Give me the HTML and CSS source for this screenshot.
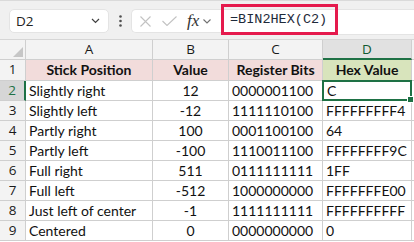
FILE: index.html
```html
<!DOCTYPE html>
<html lang="en">
<head>
    <meta charset="UTF-8">
    <meta name="viewport" content="width=device-width, initial-scale=1.0">
    <title>BIN2HEX - Excel</title>
    <link rel="stylesheet" href="styles.css">
</head>
<body>
    <div class="toolbar">
        <div class="namebox">
            <span class="cellref">D2</span>
            <svg class="chev" width="9" height="6" viewBox="0 0 9 6"><path d="M1 1 L4.5 4.5 L8 1" fill="none" stroke="#404040" stroke-width="1.2"/></svg>
        </div>
        <div class="dots">
            <svg width="3" height="12" viewBox="0 0 3 12"><circle cx="1.5" cy="1.5" r="1.3" fill="#505050"/><circle cx="1.5" cy="6" r="1.3" fill="#505050"/><circle cx="1.5" cy="10.5" r="1.3" fill="#505050"/></svg>
        </div>
        <div class="fbar">
            <div class="fbtns">
                <!-- cancel / enter / insert function -->
                <svg class="ico-x" width="11" height="11" viewBox="0 0 11 11"><path d="M0.5 0.5 L10.5 10.5 M10.5 0.5 L0.5 10.5" stroke="#c2c2c2" stroke-width="1.1" fill="none"/></svg>
                <svg class="ico-ok" width="15" height="10" viewBox="0 0 15 10"><path d="M0.5 5 L5 9.5 L14.5 0.5" stroke="#c2c2c2" stroke-width="1.1" fill="none"/></svg>
                <span class="fx">fx</span>
                <svg class="chev2" width="8" height="5" viewBox="0 0 8 5"><path d="M0.5 0.5 L4 4 L7.5 0.5" fill="none" stroke="#707070" stroke-width="1.1"/></svg>
            </div>
            <div class="finput">
                <span class="formula">=BIN2HEX(C2)</span>
            </div>
        </div>
    </div>

    <div class="sheet">
        <div class="corner"><span class="tri"></span></div>
        <div class="colhdr">A</div>
        <div class="colhdr">B</div>
        <div class="colhdr">C</div>
        <div class="colhdr sel">D</div>
        <div class="colhdr rest"></div>

        <div class="rowhdr">1</div>
        <div class="cell head">Stick Position</div>
        <div class="cell head">Value</div>
        <div class="cell head">Register Bits</div>
        <div class="cell head hex">Hex Value</div>
        <div class="cell rest"></div>

        <div class="rowhdr sel">2</div>
        <div class="cell">Slightly right</div>
        <div class="cell num">12</div>
        <div class="cell">0000001100</div>
        <div class="cell active">C<span class="handle"></span></div>
        <div class="cell rest"></div>

        <div class="rowhdr">3</div>
        <div class="cell">Slightly left</div>
        <div class="cell num">-12</div>
        <div class="cell">1111110100</div>
        <div class="cell">FFFFFFFFF4</div>
        <div class="cell rest"></div>

        <div class="rowhdr">4</div>
        <div class="cell">Partly right</div>
        <div class="cell num">100</div>
        <div class="cell">0001100100</div>
        <div class="cell">64</div>
        <div class="cell rest"></div>

        <div class="rowhdr">5</div>
        <div class="cell">Partly left</div>
        <div class="cell num">-100</div>
        <div class="cell">1110011100</div>
        <div class="cell">FFFFFFFF9C</div>
        <div class="cell rest"></div>

        <div class="rowhdr">6</div>
        <div class="cell">Full right</div>
        <div class="cell num">511</div>
        <div class="cell">0111111111</div>
        <div class="cell">1FF</div>
        <div class="cell rest"></div>

        <div class="rowhdr">7</div>
        <div class="cell">Full left</div>
        <div class="cell num">-512</div>
        <div class="cell">1000000000</div>
        <div class="cell">FFFFFFFE00</div>
        <div class="cell rest"></div>

        <div class="rowhdr">8</div>
        <div class="cell">Just left of center</div>
        <div class="cell num">-1</div>
        <div class="cell">1111111111</div>
        <div class="cell">FFFFFFFFFF</div>
        <div class="cell rest"></div>

        <div class="rowhdr">9</div>
        <div class="cell">Centered</div>
        <div class="cell num">0</div>
        <div class="cell">0000000000</div>
        <div class="cell">0</div>
        <div class="cell rest"></div>
    </div>
</body>
</html>
```

FILE: styles.css
```css
body {
    margin: 0;
    width: 414px;
    height: 242px;
    overflow: hidden;
    background-color: #ffffff;
    font-family: Lato, "Open Sans", sans-serif;
    color: #111111;
}

/* formula bar strip */
.toolbar {
    height: 40px;
    display: flex;
    align-items: flex-start;
    padding: 8px 0 0 9px;
    box-sizing: border-box;
    background-color: #f0f0f0;
    border-top: 1px solid #dadada;
    border-bottom: 1px solid #d6d6d6;
}
.namebox {
    width: 100px;
    height: 24px;
    box-sizing: border-box;
    display: flex;
    align-items: center;
    justify-content: space-between;
    padding: 0 8px 0 6px;
    background-color: #ffffff;
    border-radius: 5px;
    border: 1px solid #e4e4e4;
}
.cellref {
    font-family: "Open Sans", sans-serif;
    font-size: 13.5px;
    color: #222222;
}
.dots {
    width: 22px;
    height: 24px;
    display: flex;
    align-items: center;
    justify-content: center;
}
.fbar {
    flex: 1;
    display: flex;
    height: 24px;
}
.fbtns {
    width: 90px;
    height: 24px;
    box-sizing: border-box;
    display: flex;
    align-items: center;
    padding-left: 8px;
    background-color: #ffffff;
    border-radius: 5px 0 0 5px;
    border: 1px solid #e4e4e4;
    border-right: none;
}
.ico-x {
    margin-right: 11px;
}
.ico-ok {
    margin-right: 10px;
}
.fx {
    font-family: "Liberation Serif", serif;
    font-style: italic;
    font-size: 17px;
    color: #333333;
    margin-right: 4px;
}
.finput {
    flex: 1;
    height: 24px;
    display: flex;
    align-items: flex-start;
    background-color: #ffffff;
    border-top: 1px solid #e4e4e4;
    border-bottom: 1px solid #e4e4e4;
}
.formula {
    height: 31px;
    margin-top: -6px;
    box-sizing: border-box;
    display: flex;
    align-items: center;
    padding: 0 8px 0 6px;
    border: 3px solid #e51a4d;
    font-family: "Liberation Mono", monospace;
    font-size: 13.5px;
    color: #1e2a3a;
}

/* worksheet grid */
.sheet {
    display: grid;
    grid-template-columns: 26px 127px 76px 94px 89px 1fr;
    grid-template-rows: 20px 21px repeat(8, 20px);
}
.sheet > div {
    border-right: 1px solid #cfcfcf;
    border-bottom: 1px solid #cfcfcf;
    box-sizing: border-box;
    white-space: nowrap;
    overflow: hidden;
}
.corner {
    background-color: #f3f3f3;
    position: relative;
}
.tri {
    position: absolute;
    right: 2px;
    bottom: 2px;
    width: 0;
    height: 0;
    border-left: 10px solid transparent;
    border-bottom: 10px solid #c6c6c6;
}
.colhdr {
    background-color: #f3f3f3;
    font-family: "Open Sans", sans-serif;
    font-size: 13.5px;
    color: #1a1a1a;
    text-align: center;
    line-height: 19px;
}
.colhdr.sel {
    background-color: #e1e1e1;
    color: #0f5a30;
    border-bottom: 2px solid #1e7145;
}
.rowhdr {
    background-color: #f3f3f3;
    font-family: "Open Sans", sans-serif;
    font-size: 13.5px;
    color: #1a1a1a;
    text-align: center;
    line-height: 19px;
}
.rowhdr.sel {
    background-color: #d6d6d6;
    color: #1e7145;
    border-right: 2px solid #1e7145;
}
.cell {
    font-size: 14px;
    line-height: 19px;
    padding-left: 3px;
}
.sheet > .rest {
    border-right: none;
}
.head {
    background-color: #f2dcdb;
    font-weight: bold;
    text-align: center;
    padding-left: 0;
}
.head.hex {
    background-color: #d8e4bc;
}
.num {
    text-align: center;
    padding-left: 0;
}
.sheet > .active {
    border: 2px solid #1e7145;
    margin: -1px 0 0 -1px;
    position: relative;
    overflow: visible;
    line-height: 17px;
}
.handle {
    position: absolute;
    right: -4px;
    bottom: -4px;
    width: 5px;
    height: 5px;
    background-color: #1e7145;
    border: 1px solid #ffffff;
}
```
